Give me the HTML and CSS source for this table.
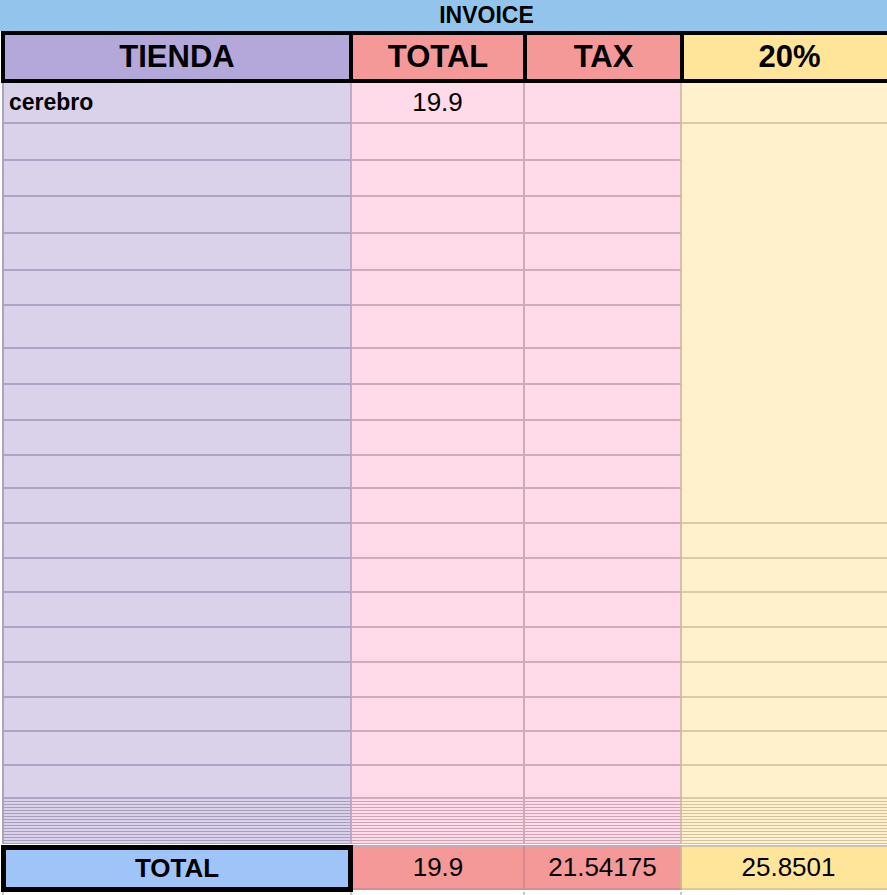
FILE: index.html
```html
<!DOCTYPE html>
<html lang="es">
<head>
<meta charset="utf-8">
<title>Invoice</title>
<link rel="stylesheet" href="styles.css">
</head>
<body>
<div class="sheet">
  <div class="title">INVOICE</div>
  <div class="head">
    <div class="c c1">TIENDA</div>
    <div class="c c2">TOTAL</div>
    <div class="c c3">TAX</div>
    <div class="c c4">20%</div>
  </div>
  <div class="rows">
    <div class="row h41"><div class="c c1 name">cerebro</div><div class="c c2 num">19.9</div><div class="c c3"></div><div class="c c4"></div></div>
    <div class="row h37"><div class="c c1"></div><div class="c c2"></div><div class="c c3"></div><div class="c c4 merged"></div></div>
    <div class="row h36"><div class="c c1"></div><div class="c c2"></div><div class="c c3"></div><div class="c c4 merged"></div></div>
    <div class="row h37"><div class="c c1"></div><div class="c c2"></div><div class="c c3"></div><div class="c c4 merged"></div></div>
    <div class="row h37"><div class="c c1"></div><div class="c c2"></div><div class="c c3"></div><div class="c c4 merged"></div></div>
    <div class="row"><div class="c c1"></div><div class="c c2"></div><div class="c c3"></div><div class="c c4 merged"></div></div>
    <div class="row h43"><div class="c c1"></div><div class="c c2"></div><div class="c c3"></div><div class="c c4 merged"></div></div>
    <div class="row h36"><div class="c c1"></div><div class="c c2"></div><div class="c c3"></div><div class="c c4 merged"></div></div>
    <div class="row h36"><div class="c c1"></div><div class="c c2"></div><div class="c c3"></div><div class="c c4 merged"></div></div>
    <div class="row"><div class="c c1"></div><div class="c c2"></div><div class="c c3"></div><div class="c c4 merged"></div></div>
    <div class="row h33"><div class="c c1"></div><div class="c c2"></div><div class="c c3"></div><div class="c c4 merged"></div></div>
    <div class="row"><div class="c c1"></div><div class="c c2"></div><div class="c c3"></div><div class="c c4"></div></div>
    <div class="row"><div class="c c1"></div><div class="c c2"></div><div class="c c3"></div><div class="c c4"></div></div>
    <div class="row h34"><div class="c c1"></div><div class="c c2"></div><div class="c c3"></div><div class="c c4"></div></div>
    <div class="row"><div class="c c1"></div><div class="c c2"></div><div class="c c3"></div><div class="c c4"></div></div>
    <div class="row"><div class="c c1"></div><div class="c c2"></div><div class="c c3"></div><div class="c c4"></div></div>
    <div class="row"><div class="c c1"></div><div class="c c2"></div><div class="c c3"></div><div class="c c4"></div></div>
    <div class="row h34"><div class="c c1"></div><div class="c c2"></div><div class="c c3"></div><div class="c c4"></div></div>
    <div class="row h34"><div class="c c1"></div><div class="c c2"></div><div class="c c3"></div><div class="c c4"></div></div>
    <div class="row h33"><div class="c c1"></div><div class="c c2"></div><div class="c c3"></div><div class="c c4"></div></div>
    <div class="row mini"><div class="c c1"></div><div class="c c2"></div><div class="c c3"></div><div class="c c4"></div></div>
    <div class="row mini"><div class="c c1"></div><div class="c c2"></div><div class="c c3"></div><div class="c c4"></div></div>
    <div class="row mini"><div class="c c1"></div><div class="c c2"></div><div class="c c3"></div><div class="c c4"></div></div>
    <div class="row mini"><div class="c c1"></div><div class="c c2"></div><div class="c c3"></div><div class="c c4"></div></div>
    <div class="row mini"><div class="c c1"></div><div class="c c2"></div><div class="c c3"></div><div class="c c4"></div></div>
    <div class="row mini"><div class="c c1"></div><div class="c c2"></div><div class="c c3"></div><div class="c c4"></div></div>
    <div class="row mini"><div class="c c1"></div><div class="c c2"></div><div class="c c3"></div><div class="c c4"></div></div>
    <div class="row mini"><div class="c c1"></div><div class="c c2"></div><div class="c c3"></div><div class="c c4"></div></div>
    <div class="row mini"><div class="c c1"></div><div class="c c2"></div><div class="c c3"></div><div class="c c4"></div></div>
    <div class="row mini"><div class="c c1"></div><div class="c c2"></div><div class="c c3"></div><div class="c c4"></div></div>
    <div class="row mini"><div class="c c1"></div><div class="c c2"></div><div class="c c3"></div><div class="c c4"></div></div>
    <div class="row mini"><div class="c c1"></div><div class="c c2"></div><div class="c c3"></div><div class="c c4"></div></div>
    <div class="row mini"><div class="c c1"></div><div class="c c2"></div><div class="c c3"></div><div class="c c4"></div></div>
    <div class="row mini"><div class="c c1"></div><div class="c c2"></div><div class="c c3"></div><div class="c c4"></div></div>
    <div class="row mini"><div class="c c1"></div><div class="c c2"></div><div class="c c3"></div><div class="c c4"></div></div>
  </div>
  <div class="total">
    <div class="t t1">TOTAL</div>
    <div class="t t2">19.9</div>
    <div class="t t3">21.54175</div>
    <div class="t t4">25.8501</div>
  </div>
  <div class="tail">
    <div class="c c1"></div><div class="c c2"></div><div class="c c3"></div><div class="c c4"></div>
  </div>
</div>
</body>
</html>
```
FILE: styles.css
```css
html, body {
  margin: 0;
  padding: 0;
  overflow: hidden;
  background: #ffffff;
}

body {
  width: 887px;
  height: 895px;
  font-family: "Liberation Sans", Arial, sans-serif;
  color: #000;
}

.sheet {
  width: 900px;
}

.title {
  box-sizing: border-box;
  width: 887px;
  height: 31px;
  padding-left: 86px;
  background: #93c5ec;
  font-weight: bold;
  font-size: 23px;
  display: flex;
  align-items: center;
  justify-content: center;
}

/* header row */
.head {
  display: flex;
  box-sizing: border-box;
  margin-left: 1px;
  height: 52px;
  border-top: 4px solid #000;
  border-bottom: 4px solid #000;
  font-weight: bold;
  font-size: 31px;
}

.head .c {
  box-sizing: border-box;
  border-left: 4px solid #000;
  display: flex;
  align-items: center;
  justify-content: center;
}

.head .c1 { width: 348px; background: #b4a7d9; }
.head .c2 { width: 174px; background: #f59898; }
.head .c3 { width: 157px; background: #f59898; }
.head .c4 { width: 215px; background: #ffe599; }

/* body rows */
.row {
  display: flex;
  margin-left: 2px;
  height: 35px;
}

.row.h33 { height: 33px; }
.row.h34 { height: 34px; }
.row.h36 { height: 36px; }
.row.h37 { height: 37px; }
.row.h41 { height: 41px; }
.row.h43 { height: 43px; }

.row .c {
  box-sizing: border-box;
  height: 100%;
  border-bottom: 2px solid;
  border-right: 2px solid;
  display: flex;
  align-items: center;
}

.row.mini { height: 3px; }
.row.mini .c { border-bottom-width: 1px; }

.c1 {
  width: 350px;
}

.row .c1, .tail .c1 {
  border-left: 2px solid #aca4bb;
  background: #dad2eb;
  border-bottom-color: #aea3c4;
  border-right-color: #c4a8c4;
}

.row .c2, .row .c3 {
  background: #ffdbe9;
  border-bottom-color: #d3aabc;
  border-right-color: #d0a9bb;
}

.row .c2, .tail .c2 { width: 173px; }
.row .c3, .tail .c3 { width: 157px; }
.row .c3, .tail .c3 { border-right-color: #d6bfac; }

.row .c4, .tail .c4 {
  width: 213px;
  background: #fff1cc;
  border-bottom-color: #dbc9a8;
  border-right-color: #dbc9a8;
}

.row .c4.merged {
  border-bottom-color: #fff1cc;
}

.row.mini .c1 { border-bottom-color: #a99dbd; }
.row.mini .c2, .row.mini .c3 { border-bottom-color: #cfa4b7; }
.row.mini .c4 { border-bottom-color: #d5c19d; }

.name {
  padding-left: 5px;
  font-weight: bold;
  font-size: 23px;
}

.num {
  justify-content: center;
  font-size: 26px;
}

/* total row */
.total {
  display: flex;
  margin-top: 1px;
  margin-left: 1px;
  height: 47px;
  font-size: 26px;
}

.total .t {
  box-sizing: border-box;
  display: flex;
  align-items: center;
  justify-content: center;
}

.total .t1 {
  width: 352px;
  height: 47px;
  border: 5px solid #000;
  background: #9fc5f8;
  font-weight: bold;
}

.total .t2, .total .t3 {
  height: 45px;
  background: #f59898;
  border-top: 2px solid #cfa4b7;
  border-bottom: 2px solid #d98c8e;
  border-right: 2px solid #d58a8c;
}

.total .t2 { width: 172px; }
.total .t3 { width: 157px; border-right-color: #d4b49a; }

.total .t4 {
  width: 213px;
  height: 45px;
  background: #ffe599;
  border-top: 2px solid #d5c19d;
  border-bottom: 2px solid #dcc89a;
}

/* grid continuation below the total row */
.tail {
  display: flex;
  margin-left: 2px;
  height: 6px;
}

.tail .c {
  box-sizing: border-box;
  height: 100%;
  background: #ffffff;
  border-right: 2px solid #c8c8c8;
}

.tail .c1 {
  border-left: 2px solid #c8c8c8;
  border-right-color: #c8c8c8;
  background: #ffffff;
}

.tail .c4 { background: #ffffff; border-right: 0; }
```
